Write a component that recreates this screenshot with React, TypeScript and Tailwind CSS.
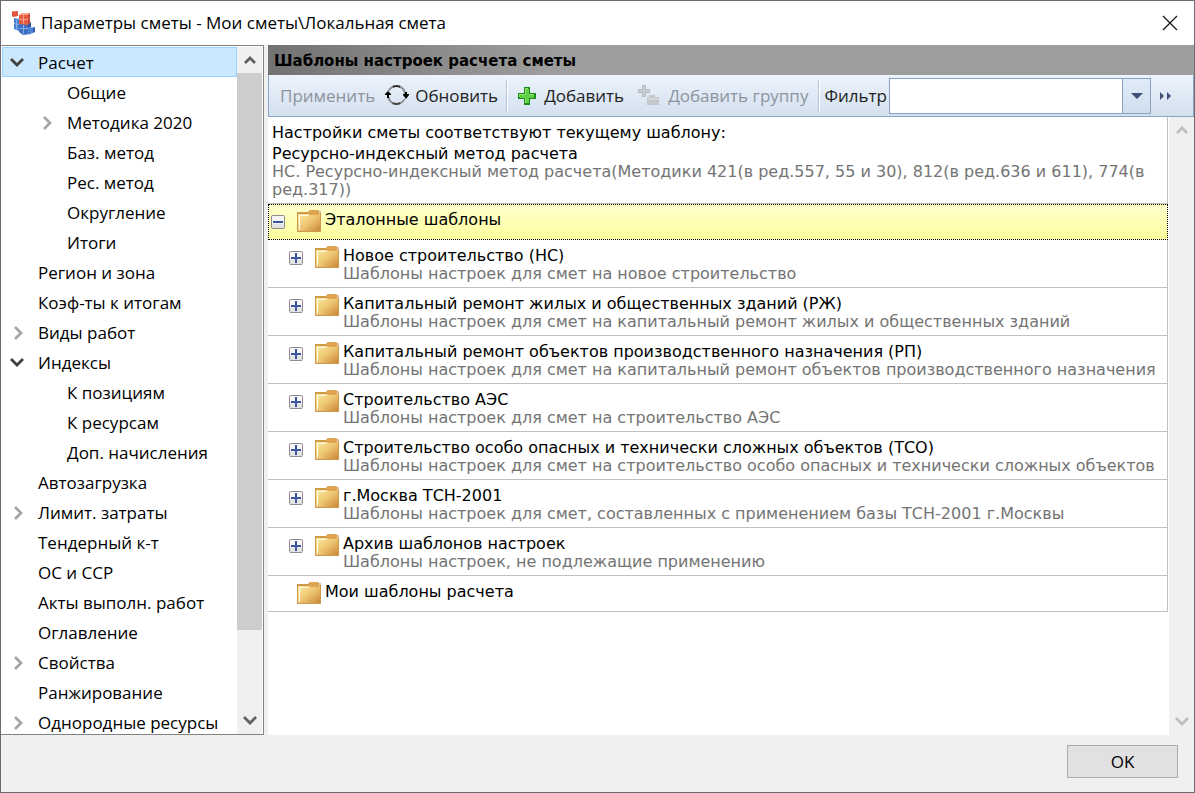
import { useState } from 'react';

interface TreeItem {
  label: string;
  level: 0 | 1;
  state?: 'open' | 'closed';
}

interface Template {
  title: string;
  description: string;
}

const treeItems: TreeItem[] = [
  { label: 'Расчет', level: 0, state: 'open' },
  { label: 'Общие', level: 1 },
  { label: 'Методика 2020', level: 1, state: 'closed' },
  { label: 'Баз. метод', level: 1 },
  { label: 'Рес. метод', level: 1 },
  { label: 'Округление', level: 1 },
  { label: 'Итоги', level: 1 },
  { label: 'Регион и зона', level: 0 },
  { label: 'Коэф-ты к итогам', level: 0 },
  { label: 'Виды работ', level: 0, state: 'closed' },
  { label: 'Индексы', level: 0, state: 'open' },
  { label: 'К позициям', level: 1 },
  { label: 'К ресурсам', level: 1 },
  { label: 'Доп. начисления', level: 1 },
  { label: 'Автозагрузка', level: 0 },
  { label: 'Лимит. затраты', level: 0, state: 'closed' },
  { label: 'Тендерный к-т', level: 0 },
  { label: 'ОС и ССР', level: 0 },
  { label: 'Акты выполн. работ', level: 0 },
  { label: 'Оглавление', level: 0 },
  { label: 'Свойства', level: 0, state: 'closed' },
  { label: 'Ранжирование', level: 0 },
  { label: 'Однородные ресурсы', level: 0, state: 'closed' },
];

const templates: Template[] = [
  { title: 'Новое строительство (НС)', description: 'Шаблоны настроек для смет на новое строительство' },
  {
    title: 'Капитальный ремонт жилых и общественных зданий (РЖ)',
    description: 'Шаблоны настроек для смет на капитальный ремонт жилых и общественных зданий',
  },
  {
    title: 'Капитальный ремонт объектов производственного назначения (РП)',
    description: 'Шаблоны настроек для смет на капитальный ремонт объектов производственного назначения',
  },
  { title: 'Строительство АЭС', description: 'Шаблоны настроек для смет на строительство АЭС' },
  {
    title: 'Строительство особо опасных и технически сложных объектов (ТСО)',
    description: 'Шаблоны настроек для смет на строительство особо опасных и технически сложных объектов',
  },
  {
    title: 'г.Москва ТСН-2001',
    description: 'Шаблоны настроек для смет, составленных с применением базы ТСН-2001 г.Москвы',
  },
  { title: 'Архив шаблонов настроек', description: 'Шаблоны настроек, не подлежащие применению' },
];

function AppLogo() {
  return (
    <svg className="h-6 w-6 shrink-0" viewBox="0 0 24 24">
      <path fill="#e0563f" d="M1 0l5-1 1 1v5l-5 1-1-1z" />
      <path fill="#f39a83" d="M1 0l5-1 1 1-5 1z" />
      <path fill="#4a7fd0" d="M3 7l5 1v12l-5-2z" />
      <path fill="#3e70c2" d="M8 13l12-1v11l-8 1-4-3z" />
      <path fill="#2c57a6" d="M17 13l3-2v11l-3 1z" />
      <path fill="#f5a28c" d="M8 4l3-2h8l-2 2z" />
      <path fill="#e65d42" d="M8 4h9v10l-9-1z" />
      <path fill="#c24431" d="M17 4l2-2v10l-2 2z" />
      <path fill="#7eaaeb" d="M17 17l2-1h5l-2 1z" />
      <path fill="#4c82d6" d="M17 17h5v5l-5 1z" />
      <path fill="#2f5cae" d="M22 17l2-1v5l-2 1z" />
      <path stroke="#f7b9a8" strokeWidth=".7" fill="none" d="M8 8.500h9l2-2M12.500 4v9" />
      <path stroke="#a3c3f2" strokeWidth=".7" fill="none" d="M3 12.500l5 1M8 17.500h9M12.500 14v9M5.500 8v11" />
    </svg>
  );
}

function Chevron({ direction, className }: { direction: 'up' | 'down' | 'right'; className: string }) {
  const paths = {
    up: 'M2 10l5-5 5 5',
    down: 'M1 3l6 6 6-6',
    right: 'M5 1l6 6-6 6',
  };
  return (
    <svg className={`h-3.5 w-3.5 ${className}`} viewBox="0 0 14 14" fill="none" stroke="currentColor">
      <path strokeWidth={2.8} d={paths[direction]} />
    </svg>
  );
}

function FolderIcon() {
  return (
    <svg className="h-6 w-6 shrink-0" viewBox="0 0 24 24">
      <defs>
        <linearGradient id="folder" x1="0" y1="0" x2="1" y2="1">
          <stop offset="0" stopColor="#ffeea0" />
          <stop offset=".5" stopColor="#eec673" />
          <stop offset="1" stopColor="#c9883a" />
        </linearGradient>
      </defs>
      <path fill="#d0c6b8" d="M11 1h13v3H11z" />
      <path fill="#cf9a4c" d="M0 2h12v1h12v19H0z" />
      <path fill="url(#folder)" d="M1 4h11l1-1h10v18H1z" />
      <path fill="none" stroke="#fffbea" d="M2.500 20V5.500h8l2-1.500H22" />
      <path fill="#dfa550" d="M12 1q0-1 1-1h8q1 0 1 1v3q0 1-1 1h-8q-1 0-1-1z" />
    </svg>
  );
}

function Expander({ open }: { open: boolean }) {
  return (
    <button aria-label={open ? 'Свернуть' : 'Развернуть'} className="mt-[5px] h-3.5 w-3.5 shrink-0">
      <svg viewBox="0 0 14 14" className="h-3.5 w-3.5">
        <rect x=".5" y=".5" width="13" height="13" rx="1" fill="#f5f5f5" stroke="#8b8b8b" />
        <path fill="#e2e2e2" d="M1 9h12v4H1z" />
        <path fill="#3a56a0" d="M2 6h10v2H2z" />
        {!open && <path fill="#3a56a0" d="M6 2h2v10H6z" />}
      </svg>
    </button>
  );
}

function RefreshIcon() {
  return (
    <svg className="h-6 w-6" viewBox="0 0 24 24">
      <g fill="none" strokeWidth="2">
        <path stroke="#333" d="M7.500 3q4-2 8 0" />
        <path stroke="#8d929a" d="M15.500 3q4 2 4.500 7" />
        <path stroke="#8d929a" d="M3.500 13q.5 4 4 6" />
        <path stroke="#444" d="M7.500 19q4 2 8 0" />
        <path stroke="#8d929a" d="M15.500 19q3-1.500 4-4M7.500 3q-3 1.500-4 4" />
      </g>
      <path fill="#000" d="M0 10l3-3 3 3v1H4v3H2v-3H0zM18 10h2V8h2v2h2v1l-3 4-3-4z" />
    </svg>
  );
}

function PlusIcon() {
  return (
    <svg className="h-[18px] w-[18px]" viewBox="0 0 18 18">
      <path fill="#1c8a1c" d="M6 0h6v6h6v6h-6v6H6v-6H0V6h6z" />
      <path fill="#8fe36a" d="M7 1h3v6h6v3h-6v6H7v-6H1V7h6z" />
      <path fill="#5fd044" d="M8 2h3v6h5v3h-5v5H8v-5H2V8h6z" />
    </svg>
  );
}

function AddGroupIcon() {
  return (
    <svg className="h-[21px] w-[22px]" viewBox="0 0 22 21">
      <path fill="#b9bec5" d="M4 0h4v4h4v4H8v4H4V8H0V4h4z" />
      <path fill="#d5d9dd" d="M5.500 1h1v4.500H11v1H6.500V11h-1V6.500H1v-1h4.500z" />
      <path fill="#c3c7cc" d="M9 12h2v-2h6v2h4v8H9z" />
      <path fill="#d3d7dc" d="M10 13h10v2H10z" />
    </svg>
  );
}

function Separator() {
  return <div className="mx-1 h-8 w-0.5 border-r border-white bg-[#b4c4da]" />;
}

export default function App() {
  const [selected, setSelected] = useState('Расчет');
  const [filter, setFilter] = useState('');

  return (
    <div className="flex h-screen flex-col border border-[#6b6b6f] bg-[#f0f0f0] font-['Open_Sans','Noto_Sans',sans-serif] text-[17px] text-black">
      <header className="flex h-11 shrink-0 items-center bg-white pl-2.5">
        <AppLogo />
        <h1 className="ml-1.5 flex-1">Параметры сметы - Мои сметы\Локальная смета</h1>
        <button aria-label="Закрыть" className="mr-4 h-4 w-4">
          <svg viewBox="0 0 16 16" className="h-4 w-4" fill="none" stroke="#111">
            <path strokeWidth={1.2} d="M1 1l14 14M15 1L1 15" />
          </svg>
        </button>
      </header>

      <div className="flex min-h-0 flex-1">
        <nav className="flex w-[263px] shrink-0 border border-l-0 border-[#828282] bg-white pt-px pl-px">
          <ul className="min-w-0 flex-1 overflow-hidden">
            {treeItems.map((item) => (
              <li key={item.label}>
                <button
                  onClick={() => setSelected(item.label)}
                  className={`flex h-[30px] w-full items-center border pt-px text-left whitespace-nowrap ${
                    item.level === 1 ? 'pl-9' : 'pl-[7px]'
                  } ${selected === item.label ? 'border-[#99d1ff] bg-[#cce8ff]' : 'border-transparent'}`}
                >
                  <span className="mr-3.5 h-3.5 w-3.5 shrink-0">
                    {item.state === 'open' && <Chevron direction="down" className="text-[#404040]" />}
                    {item.state === 'closed' && <Chevron direction="right" className="text-[#a6a6a6]" />}
                  </span>
                  {item.label}
                </button>
              </li>
            ))}
          </ul>
          <div className="mr-px flex w-[25px] flex-col items-center bg-[#f0f0f0]">
            <button aria-label="Вверх" className="flex h-[26px] items-center">
              <Chevron direction="up" className="text-[#606060]" />
            </button>
            <div className="h-[557px] w-full bg-[#cdcdcd]" />
            <button aria-label="Вниз" className="mt-auto flex h-[26px] items-center">
              <Chevron direction="down" className="text-[#606060]" />
            </button>
          </div>
        </nav>

        <main className="ml-1 flex min-w-0 flex-1 flex-col font-['DejaVu_Sans',sans-serif] text-[16px] leading-[18px]">
          <h2 className="flex h-[30px] shrink-0 items-center bg-linear-to-r from-[#727272] to-[#9d9d9d] to-30% pt-0.5 pl-1.5 text-[15px] font-bold">
            Шаблоны настроек расчета сметы
          </h2>

          <div className="flex h-[42px] shrink-0 items-center border-x border-b border-[#8ba5c9] bg-linear-to-b from-[#ecf3fc] to-[#d3e0ee] font-['Open_Sans','Noto_Sans',sans-serif] text-[17px] whitespace-nowrap text-[#222]">
            <button disabled className="ml-[11px] text-[#8d949e]">
              Применить
            </button>
            <button className="ml-2.5 flex items-center gap-1.5">
              <RefreshIcon />
              Обновить
            </button>
            <div className="ml-1">
              <Separator />
            </div>
            <button className="ml-1.5 flex items-center gap-2">
              <PlusIcon />
              Добавить
            </button>
            <button disabled className="ml-3.5 flex items-center gap-2 text-[#8d949e]">
              <AddGroupIcon />
              Добавить группу
            </button>
            <div className="ml-1.5">
              <Separator />
            </div>
            <label htmlFor="filter">Фильтр</label>
            <div className="ml-0.5 flex h-9 min-w-0 flex-1 border border-[#8ba0c0] bg-white">
              <input
                id="filter"
                value={filter}
                onChange={(e) => setFilter(e.target.value)}
                className="min-w-0 flex-1 px-1 outline-none"
              />
              <button
                aria-label="Список фильтров"
                className="flex w-7 items-center justify-center border-l border-[#8ba0c0] bg-linear-to-b from-[#e0ebf8] to-[#cfdeef]"
              >
                <svg className="h-1.5 w-3" viewBox="0 0 12 6" fill="#3f4f73">
                  <path d="M0 0h12L6 6z" />
                </svg>
              </button>
            </div>
            <button aria-label="Ещё" className="mr-5 ml-2 h-2 w-3.5">
              <svg className="h-2 w-3.5" viewBox="0 0 14 8" fill="#3f4f73">
                <path d="M1 0l4 4-4 4zM8 0l4 4-4 4z" />
              </svg>
            </button>
          </div>

          <div className="flex min-h-0 flex-1 bg-white">
            <div className="mr-px min-w-0 flex-1 overflow-hidden">
              <div className="border-r border-b border-[#c0c0c0] pt-[7px] pr-2 pb-1 pl-1">
                <p className="mb-[3px]">Настройки сметы соответствуют текущему шаблону:</p>
                <p>Ресурсно-индексный метод расчета</p>
                <p className="text-[#747474]">
                  НС. Ресурсно-индексный метод расчета(Методики 421(в ред.557, 55 и 30), 812(в ред.636 и 611), 774(в
                  ред.317))
                </p>
              </div>
              <div className="flex h-9 border border-dotted border-black bg-linear-to-b from-[#ffffcc] to-[#ffff9c] pt-[5px] pl-0.5">
                <Expander open />
                <div className="ml-3 flex gap-1">
                  <FolderIcon />
                  <h3 className="pt-px">Эталонные шаблоны</h3>
                </div>
              </div>
              <ul className="border-r border-[#c0c0c0]">
                {templates.map((template) => (
                  <li key={template.title} className="flex h-12 border-b border-[#c0c0c0] pt-1.5 pl-[21px]">
                    <Expander open={false} />
                    <div className="ml-3 flex min-w-0 gap-1">
                      <FolderIcon />
                      <div className="pt-px whitespace-nowrap">
                        <h3>{template.title}</h3>
                        <p className="text-[#747474]">{template.description}</p>
                      </div>
                    </div>
                  </li>
                ))}
                <li className="flex h-9 gap-1 border-b border-[#c0c0c0] pt-1.5 pl-[29px]">
                  <FolderIcon />
                  <h3 className="pt-px">Мои шаблоны расчета</h3>
                </li>
              </ul>
            </div>
            <div className="flex w-[25px] shrink-0 flex-col items-center justify-between bg-[#f0f0f0]">
              <button disabled aria-label="Вверх" className="flex h-[26px] items-center">
                <Chevron direction="up" className="text-[#bfbfbf]" />
              </button>
              <button disabled aria-label="Вниз" className="flex h-[26px] items-center">
                <Chevron direction="down" className="text-[#bfbfbf]" />
              </button>
            </div>
          </div>
        </main>
      </div>

      <footer className="flex h-[57px] shrink-0 justify-end pt-2.5 pr-4">
        <button className="h-[33px] w-[111px] border border-[#adadad] bg-[#e1e1e1]">OK</button>
      </footer>
    </div>
  );
}
